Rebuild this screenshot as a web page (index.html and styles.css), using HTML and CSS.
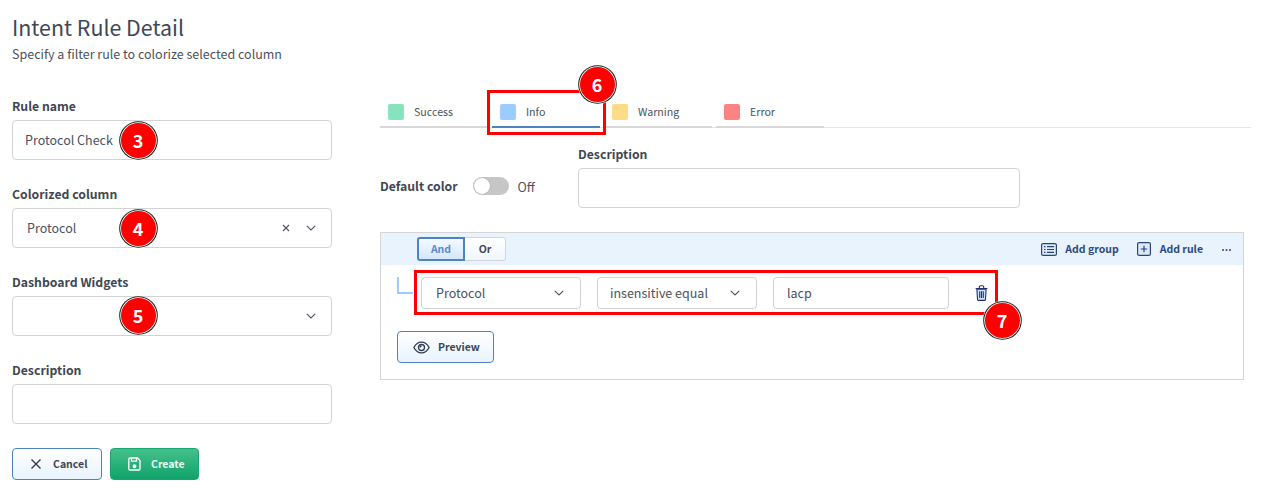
FILE: index.html
```html
<!DOCTYPE html>
<html lang="en">
<head>
<meta charset="utf-8">
<title>Intent Rule Detail</title>
<link rel="stylesheet" href="styles.css">
</head>
<body>
<div class="page">
  <header class="head">
    <h1 class="title">Intent Rule Detail</h1>
    <p class="subtitle">Specify a filter rule to colorize selected column</p>
  </header>
  <div class="columns">
    <section class="left">
      <div class="field">
        <label class="label">Rule name</label>
        <div class="input"><span class="value">Protocol Check</span></div>
      </div>
      <div class="field">
        <label class="label">Colorized column</label>
        <div class="input select-lg"><span class="value">Protocol</span>
          <span class="spacer"></span>
          <svg class="ico-x" width="8" height="8" viewBox="0 0 8 8"><path d="M1 1l6 6M7 1L1 7" stroke="#4b5563" stroke-width="1.1" fill="none"/></svg>
          <svg class="chev" width="10" height="6" viewBox="0 0 10 6"><path d="M.8.8 5 5l4.2-4.2" stroke="#4b5563" stroke-width="1.1" fill="none"/></svg>
        </div>
      </div>
      <div class="field">
        <label class="label">Dashboard Widgets</label>
        <div class="input select-lg"><span class="spacer"></span>
          <svg class="chev" width="10" height="6" viewBox="0 0 10 6"><path d="M.8.8 5 5l4.2-4.2" stroke="#4b5563" stroke-width="1.1" fill="none"/></svg>
        </div>
      </div>
      <div class="field field-last">
        <label class="label">Description</label>
        <div class="input"></div>
      </div>
      <div class="actions">
        <button class="btn btn-cancel">
          <svg width="12" height="12" viewBox="0 0 12 12"><path d="M1.500 1.500l9 9M10.500 1.500l-9 9" stroke="#2f3b52" stroke-width="1.400" fill="none"/></svg>
          <span>Cancel</span>
        </button>
        <button class="btn btn-create">
          <svg width="13" height="14" viewBox="0 0 13 14" fill="none" stroke="#fff" stroke-width="1.300"><path d="M2 1h7.500L12 3.500v8.300a1.200 1.200 0 0 1-1.200 1.200H2A1.200 1.200 0 0 1 .8 11.800V2.200A1.200 1.200 0 0 1 2 1z"/><path d="M3.500 1.200v3h5v-3"/><circle cx="6.500" cy="9.300" r="1.300" fill="#fff"/></svg>
          <span>Create</span>
        </button>
      </div>
    </section>
    <section class="right">
      <nav class="tabs">
        <div class="tab"><i class="swatch sw-success"></i><span>Success</span></div>
        <div class="tab tab-active"><i class="swatch sw-info"></i><span>Info</span></div>
        <div class="tab"><i class="swatch sw-warning"></i><span>Warning</span></div>
        <div class="tab"><i class="swatch sw-error"></i><span>Error</span></div>
      </nav>
      <div class="meta">
        <div class="default-color">
          <span class="label label-inline">Default color</span>
          <span class="toggle"><i class="knob"></i></span>
          <span class="off">Off</span>
        </div>
        <div class="field-desc">
          <label class="label">Description</label>
          <div class="input"></div>
        </div>
      </div>
      <div class="builder">
        <div class="builder-head">
          <div class="segment">
            <button class="seg seg-on">And</button>
            <button class="seg seg-off">Or</button>
          </div>
          <span class="spacer"></span>
          <span class="link link-group">
            <svg width="16" height="13" viewBox="0 0 16 13" fill="none" stroke="#2b4478" stroke-width="1.200"><rect x=".6" y=".6" width="14.800" height="11.800" rx="1.500" fill="#dbe9fb"/><path d="M3 3.700h1.500M6 3.700h7M3 6.500h1.500M6 6.500h7M3 9.300h1.500M6 9.300h7"/></svg>
            <span>Add group</span>
          </span>
          <span class="link link-rule">
            <svg width="14" height="14" viewBox="0 0 14 14" fill="none" stroke="#2b4478" stroke-width="1.200"><rect x=".6" y=".6" width="12.800" height="12.800" rx="1.500" fill="#dbe9fb"/><path d="M7 3.800v6.400M3.800 7h6.400"/></svg>
            <span>Add rule</span>
          </span>
          <svg class="dots" width="9" height="2" viewBox="0 0 9 2"><circle cx="1" cy="1" r="1" fill="#2f4a7d"/><circle cx="4.500" cy="1" r="1" fill="#2f4a7d"/><circle cx="8" cy="1" r="1" fill="#2f4a7d"/></svg>
        </div>
        <div class="builder-body">
          <div class="rule">
            <i class="connector"></i>
            <div class="input input-sm w-160"><span class="value-sm">Protocol</span><span class="spacer"></span>
              <svg class="chev-sm" width="10" height="6" viewBox="0 0 10 6"><path d="M.8.8 5 5l4.2-4.2" stroke="#4b5563" stroke-width="1.1" fill="none"/></svg>
            </div>
            <div class="input input-sm op w-160"><span>insensitive equal</span><span class="spacer"></span>
              <svg class="chev-sm" width="10" height="6" viewBox="0 0 10 6"><path d="M.8.8 5 5l4.2-4.2" stroke="#4b5563" stroke-width="1.1" fill="none"/></svg>
            </div>
            <div class="input input-sm w-176"><span>lacp</span></div>
            <svg class="trash" width="13" height="16" viewBox="0 0 13 16" fill="none" stroke="#27306f" stroke-width="1.100"><path d="M1.900 4.200h9.200l-.6 10a1.200 1.200 0 0 1-1.200 1.200H3.700a1.200 1.200 0 0 1-1.200-1.200z" fill="#cfe2fb"/><path d="M.6 3.500h11.800M4.300 3.200V1.900A1.200 1.200 0 0 1 5.500.7h2a1.200 1.200 0 0 1 1.200 1.200v1.300M4.700 6.300v6.800M6.500 6.300v6.800M8.300 6.300v6.800"/></svg>
          </div>
          <button class="btn btn-preview">
            <svg width="17" height="13" viewBox="0 0 17 13" fill="none" stroke="#2f3b52" stroke-width="1.300"><path d="M.9 6.500C2.700 3 5.300 1.100 8.500 1.100s5.800 1.900 7.600 5.400c-1.800 3.500-4.400 5.400-7.600 5.400S2.700 10 .9 6.500z"/><circle cx="8.500" cy="6.500" r="3"/><path d="M8.500 5a1.500 1.500 0 0 0-1.500 1.500"/></svg>
            <span>Preview</span>
          </button>
        </div>
      </div>
    </section>
  </div>

  <div class="mark-box mark-tab"></div>
  <div class="mark-box mark-rule"></div>
  <span class="badge b3">3</span>
  <span class="badge b4">4</span>
  <span class="badge b5">5</span>
  <span class="badge b6">6</span>
  <span class="badge b7">7</span>
</div>
</body>
</html>
```
FILE: styles.css
```css
* { box-sizing: border-box; }
html, body { margin: 0; padding: 0; background: #fff; overflow: hidden; }
body {
  font-family: "Noto Sans CJK SC", "Noto Sans CJK JP", "Noto Sans", sans-serif;
  color: #3f4754;
  font-size: 12.500px;
}
.page { position: relative; width: 1262px; height: 493px; padding: 11px 11px 0 12px; }
.head { height: 86px; }
.title { margin: 0; font-size: 21.400px; font-weight: 400; line-height: 32px; color: #3f4754; }
.subtitle { margin: 1px 0 0; font-size: 12.500px; line-height: 20px; color: #4a5260; }
.columns { display: flex; gap: 48px; }
.left { width: 320px; flex: none; }
.right { flex: 1; min-width: 0; }
.field { margin-bottom: 25px; }
.field-last { margin-bottom: 24px; }
.label { display: block; font-size: 12.250px; font-weight: 700; line-height: 18px; margin-bottom: 5px; color: #3f4754; }
.label-inline { display: inline; margin: 0; }
.input {
  display: flex; align-items: center; height: 40px; padding: 0 12px;
  background: #fff; border: 1px solid #d2d2d2; border-radius: 4px;
  font-size: 12.500px; color: #4a5260;
}
.input span { margin-bottom: 2px; }
.select-lg { padding: 0 15px 0 14px; }
.spacer { flex: 1; }
.ico-x { margin-right: 16px; }
.actions { display: flex; gap: 8px; }
.btn {
  display: inline-flex; align-items: center; height: 32px; border-radius: 4px;
  font-family: inherit; font-size: 10.500px; font-weight: 700; padding: 0; cursor: pointer;
}
.btn span, .link span { margin-bottom: 2px; }
.btn-cancel {
  width: 90px; padding-left: 17px; gap: 11px; color: #3f4754;
  border: 1px solid #4f83bf; background: linear-gradient(#fff, #e8f3fe);
}
.btn-create {
  width: 89px; padding-left: 17px; gap: 10px; color: #eafff5;
  border: 1px solid #17a571; background: linear-gradient(#45c08a, #0fa36b);
}
.tabs { display: flex; gap: 4px; height: 31px; box-shadow: inset 0 -1px 0 #e6e6e6; }
.tab {
  display: flex; align-items: flex-start; width: 108px; height: 31px; padding: 7px 0 0 8px;
  border-bottom: 2px solid #d8d8d8; font-size: 10.650px; line-height: 16px; color: #4a5260;
}
.tab span { margin-left: 10px; }
.tab-active { border-bottom-color: #4f83bf; }
.swatch { display: block; width: 16px; height: 16px; border-radius: 2px; }
.sw-success { background: #86e3bd; }
.sw-info { background: #9ccbfd; }
.sw-warning { background: #fcdc87; }
.sw-error { background: #fb8384; }
.meta { display: flex; align-items: flex-end; margin-top: 17px; }
.default-color { display: flex; align-items: center; width: 198px; height: 40px; padding-bottom: 4px; }
.toggle { position: relative; display: block; width: 36px; height: 18px; margin-left: 15px; border-radius: 9px; background: #c6c6c6; }
.knob { position: absolute; left: 1px; top: 1px; width: 16px; height: 16px; border-radius: 50%; background: #fff; box-shadow: 0 0 1px rgba(0,0,0,.4); }
.off { margin-left: 9px; font-size: 12.500px; color: #4a5260; }
.field-desc { width: 442px; }
.builder { width: 864px; height: 148px; margin-top: 24px; border: 1px solid #d5d5d5; }
.builder-head { display: flex; align-items: center; height: 32px; padding: 0 12px 0 36px; background: #e8f3fe; }
.segment { display: flex; }
.seg { height: 24px; font-family: inherit; font-size: 10.500px; font-weight: 700; padding: 0 0 2px; cursor: pointer; }
.seg-on { width: 48px; border: 2px solid #4f83bf; border-radius: 3px 0 0 3px; background: linear-gradient(#f4f9ff, #d4e7fb); color: #5b8bc9; }
.seg-off { width: 41px; border: 1px solid #d2d6db; border-left: 0; border-radius: 0 3px 3px 0; background: linear-gradient(#fff, #f0f6fd); color: #3f4754; }
.link { display: flex; align-items: center; font-size: 10.500px; font-weight: 700; color: #2f4a7d; }
.link-group { gap: 8px; }
.link-rule { gap: 9px; margin-left: 18px; }
.dots { margin-left: 19px; margin-top: 2px; }
.builder-body { padding: 12px 16px 0; }
.rule { display: flex; align-items: flex-start; }
.connector { display: block; flex: none; width: 16px; height: 17px; margin-right: 8px; border-left: 2px solid #9ccbfd; border-bottom: 2px solid #9ccbfd; }
.input-sm { height: 32px; padding: 0 13px; flex: none; }
.input-sm + .input-sm { margin-left: 16px; }
.value-sm { margin-left: 1px; }
.op { padding-left: 12px; }
.chev-sm { margin-right: 3px; }
.w-160 { width: 160px; }
.w-176 { width: 176px; }
.trash { flex: none; margin: 8px 0 0 26px; }
.btn-preview {
  width: 97px; margin-top: 22px; padding-left: 15px; gap: 8px; color: #3f4754;
  border: 1px solid #4f83bf; background: linear-gradient(#fff, #e8f3fe);
}
.mark-box { position: absolute; border: 3px solid #f00; }
.mark-tab { left: 487px; top: 90px; width: 119px; height: 45px; }
.mark-rule { left: 414px; top: 270px; width: 584px; height: 45px; }
.badge {
  position: absolute; width: 35px; height: 35px; border-radius: 50%;
  display: flex; align-items: center; justify-content: center;
  background: #f00; color: #fff; font-size: 18px; font-weight: 700; line-height: 1;
  box-shadow: 0 0 0 .8px #fff, 0 0 0 1.800px #1a1a1a, 0 0 0 2.300px #fff;
}
.b3 { left: 120.500px; top: 122.500px; }
.b4 { left: 120.500px; top: 210.500px; }
.b5 { left: 120.500px; top: 297.500px; }
.b6 { left: 579.500px; top: 66.500px; }
.b7 { left: 984.500px; top: 302.500px; }
```
